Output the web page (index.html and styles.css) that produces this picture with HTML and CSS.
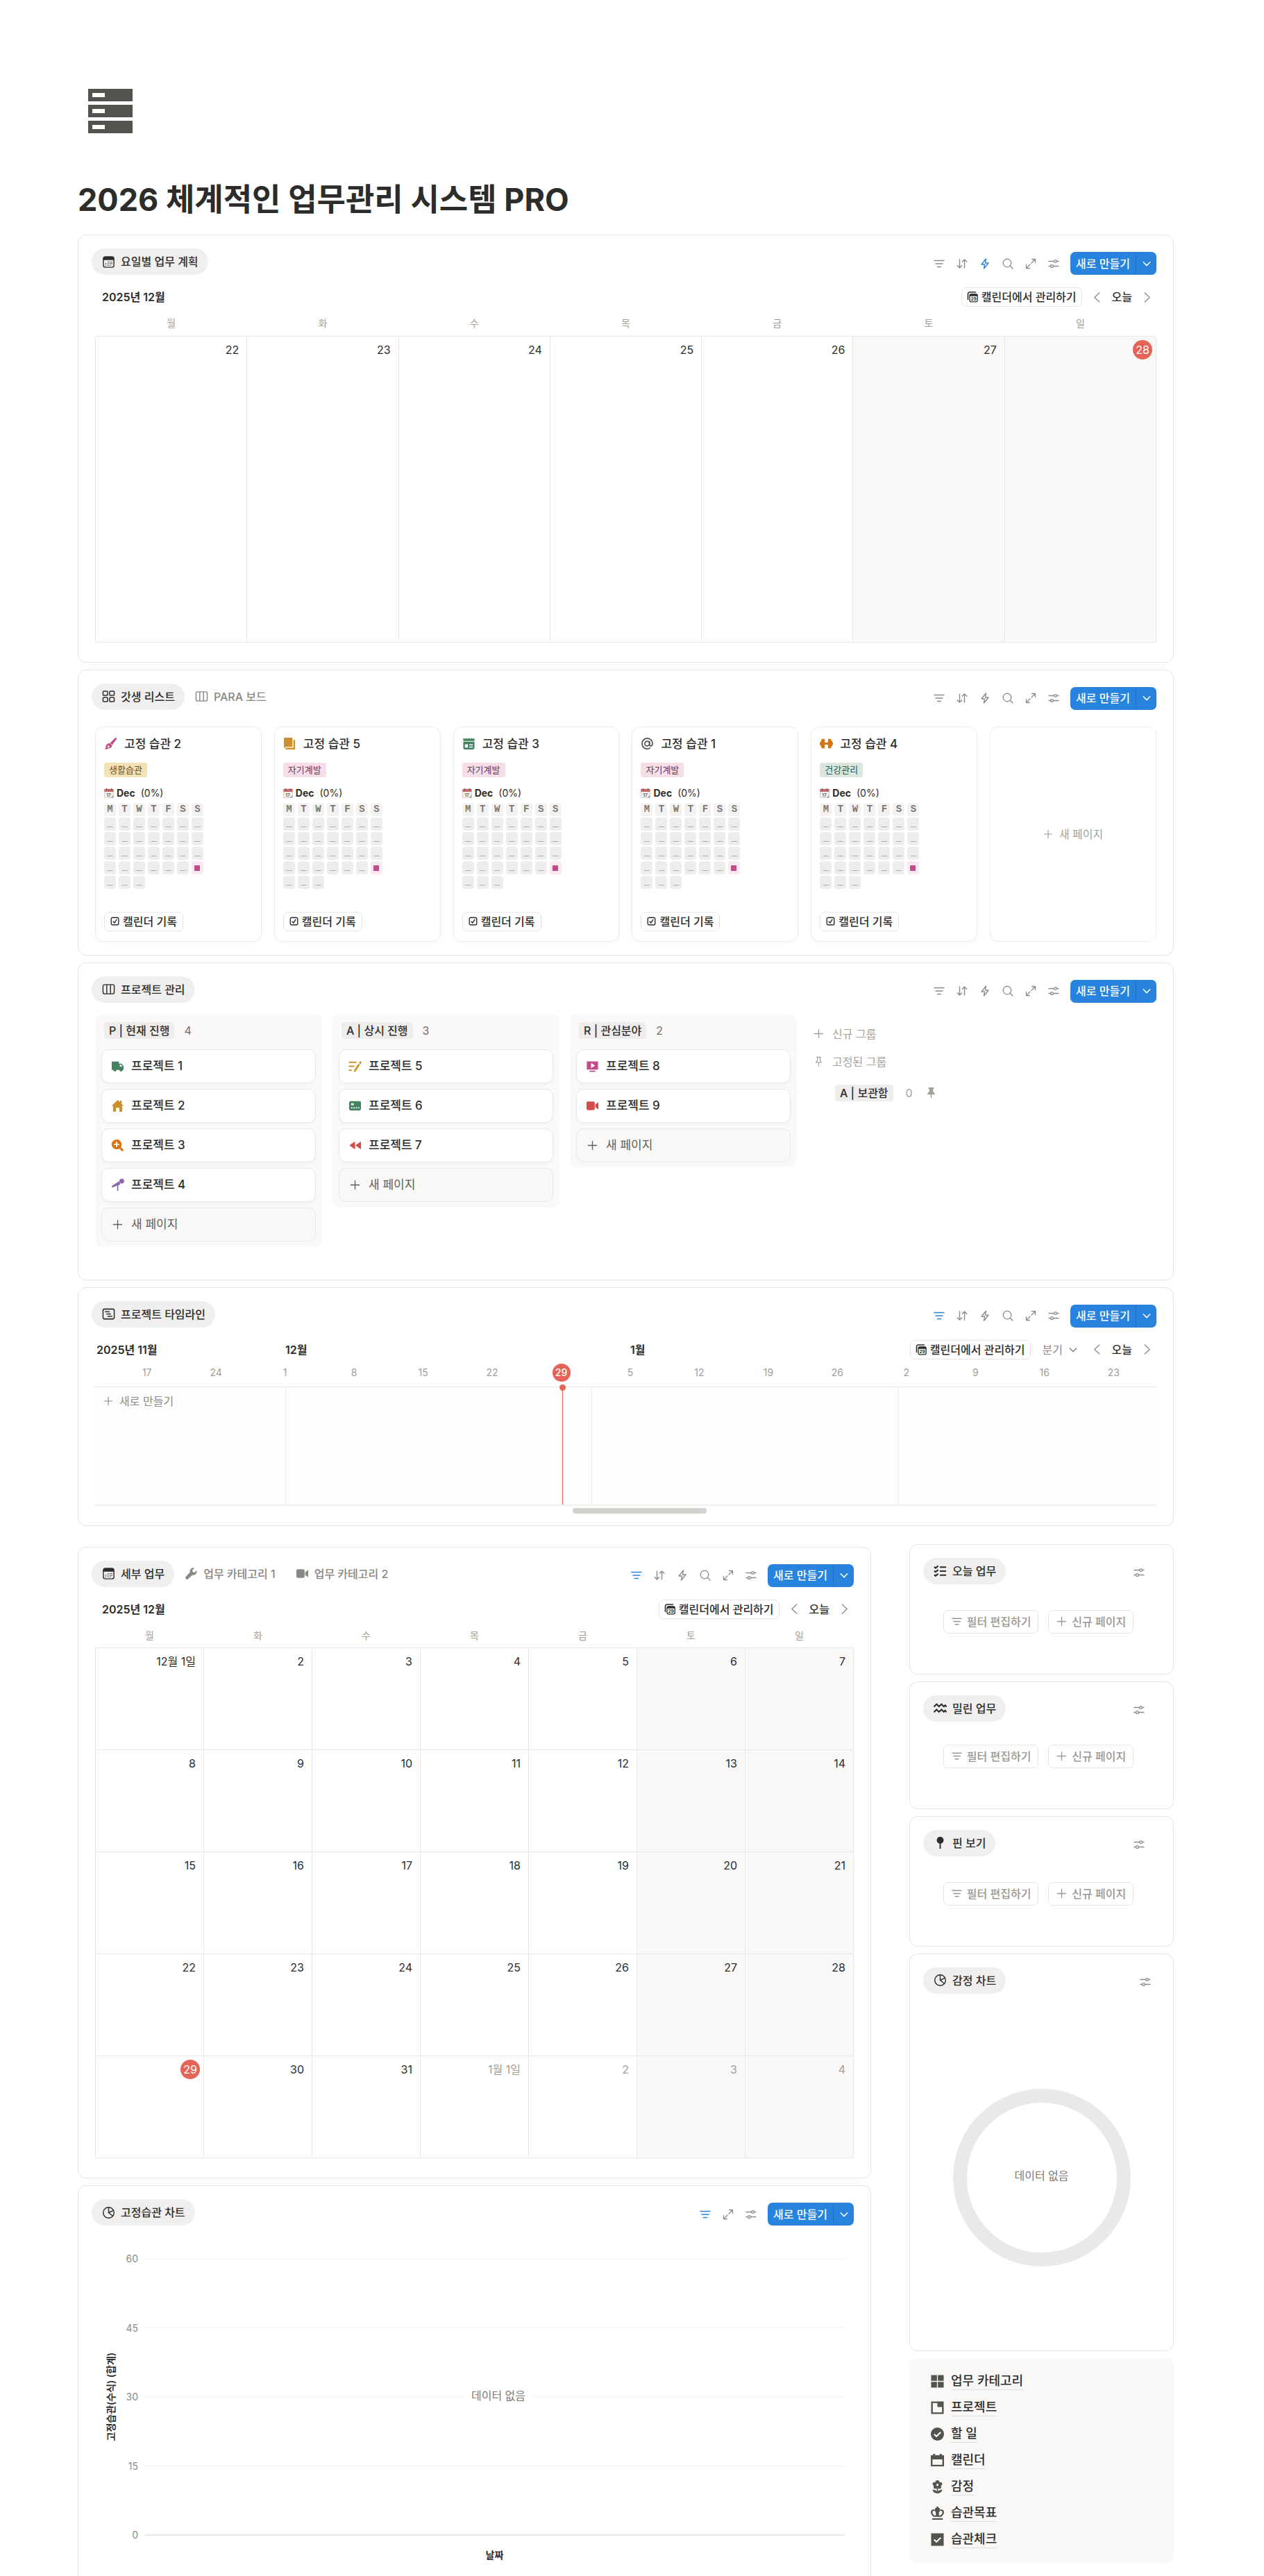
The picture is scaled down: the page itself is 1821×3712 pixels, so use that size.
FILE: index.html
```html
<!DOCTYPE html>
<html lang="ko">
<head>
    <meta charset="UTF-8">
    <meta name="viewport" content="width=device-width, initial-scale=1.0">
    <title>2026 체계적인 업무관리 시스템 PRO</title>
    <link rel="stylesheet" href="styles.css">
</head>
<body>
    <!-- Icon sprite -->
    <svg class="sprite" aria-hidden="true">
        <symbol id="i-filter" viewBox="0 0 16 16"><path d="M1 3.5h14M3 8h10M5.5 12.500h5" fill="none" stroke="currentColor" stroke-width="1.5" stroke-linecap="round"/></symbol>
        <symbol id="i-sort" viewBox="0 0 16 16"><path d="M4.5 2v12M1.200 10.700l3.300 3.300 3.300-3.300M11.500 14V2M8.200 5.300L11.500 2l3.300 3.300" fill="none" stroke="currentColor" stroke-width="1.4" stroke-linecap="round" stroke-linejoin="round"/></symbol>
        <symbol id="i-bolt" viewBox="0 0 16 16"><path d="M9.500 1L3 9h4.500l-1 6L13 7H8.500z" fill="none" stroke="currentColor" stroke-width="1.4" stroke-linejoin="round"/></symbol>
        <symbol id="i-search" viewBox="0 0 16 16"><circle cx="7" cy="7" r="5.8" fill="none" stroke="currentColor" stroke-width="1.3"/><path d="M11.300 11.300L15 15" stroke="currentColor" stroke-width="1.3" stroke-linecap="round"/></symbol>
        <symbol id="i-expand" viewBox="0 0 16 16"><path d="M9.500 1.500h5v5M14.500 1.500L9 7M6.500 14.500h-5v-5M1.500 14.500L7 9" fill="none" stroke="currentColor" stroke-width="1.3" stroke-linecap="round" stroke-linejoin="round"/></symbol>
        <symbol id="i-sliders" viewBox="0 0 16 16"><path d="M1 4.500h7.500M12.500 4.500H15M1 11.500h2.500M7.500 11.500H15" stroke="currentColor" stroke-width="1.3" stroke-linecap="round"/><circle cx="10.500" cy="4.500" r="1.900" fill="none" stroke="currentColor" stroke-width="1.3"/><circle cx="5.500" cy="11.500" r="1.900" fill="none" stroke="currentColor" stroke-width="1.3"/></symbol>
        <symbol id="i-down" viewBox="0 0 16 16"><path d="M2.500 5.500L8 11l5.500-5.500" fill="none" stroke="currentColor" stroke-width="1.7" stroke-linecap="round" stroke-linejoin="round"/></symbol>
        <symbol id="i-left" viewBox="0 0 16 16"><path d="M11.500 1L4 8l7.500 7" fill="none" stroke="currentColor" stroke-width="1.4" stroke-linecap="round" stroke-linejoin="round"/></symbol>
        <symbol id="i-right" viewBox="0 0 16 16"><path d="M4.500 1L12 8l-7.500 7" fill="none" stroke="currentColor" stroke-width="1.4" stroke-linecap="round" stroke-linejoin="round"/></symbol>
        <symbol id="i-plus" viewBox="0 0 16 16"><path d="M8 1.500v13M1.500 8h13" stroke="currentColor" stroke-width="1.4" stroke-linecap="round"/></symbol>
        <symbol id="i-month" viewBox="0 0 20 20"><rect x="2" y="2" width="16" height="16" rx="3" fill="none" stroke="currentColor" stroke-width="1.5"/><path d="M2 5a3 3 0 0 1 3-3h10a3 3 0 0 1 3 3v2H2z" fill="currentColor"/><path d="M8.500 10H10M11.500 10H13M14 10h1.500M5 12.500h1.500M8.500 12.500H10M11.500 12.500H13M14 12.500h1.500M5 15h1.500M8.500 15H10M11.500 15H13" stroke="currentColor" stroke-width="1.2"/></symbol>
        <symbol id="i-gallery" viewBox="0 0 20 20"><g fill="none" stroke="currentColor" stroke-width="1.6"><rect x="1.5" y="2" width="7" height="6.5" rx="1.5"/><rect x="11.5" y="2" width="7" height="6.5" rx="1.5"/><rect x="1.5" y="11.5" width="7" height="6.5" rx="1.5"/><rect x="11.5" y="11.5" width="7" height="6.5" rx="1.5"/></g></symbol>
        <symbol id="i-board" viewBox="0 0 20 20"><path d="M4 3h12a2.500 2.500 0 0 1 2.500 2.500v9A2.500 2.500 0 0 1 16 17H4a2.500 2.500 0 0 1-2.500-2.500v-9A2.500 2.500 0 0 1 4 3zM7.200 3v14M12.800 3v14" fill="none" stroke="currentColor" stroke-width="1.5"/></symbol>
        <symbol id="i-timeline" viewBox="0 0 20 20"><rect x="1.5" y="2.5" width="17" height="15" rx="2.5" fill="none" stroke="currentColor" stroke-width="1.6"/><path d="M5 6.500h6M7 10h6M9 13.500h6" stroke="currentColor" stroke-width="1.5" stroke-linecap="round"/></symbol>
        <symbol id="i-pie" viewBox="0 0 20 20"><circle cx="10" cy="10" r="8.2" fill="none" stroke="currentColor" stroke-width="1.5"/><path d="M10 2v8l6.200 5M10 10l7.500-3.500" fill="none" stroke="currentColor" stroke-width="1.5"/></symbol>
        <symbol id="i-wrench" viewBox="0 0 20 20"><path d="M18.300 5.300l-3.200 3.100-2.800-.7-.7-2.800 3.200-3.200A5.300 5.300 0 0 0 8 8.200l-6.100 6.600a2.300 2.300 0 0 0 3.300 3.300l6.600-6.100a5.300 5.300 0 0 0 6.500-6.700z" fill="currentColor"/></symbol>
        <symbol id="i-video" viewBox="0 0 20 20"><rect x="1" y="3.500" width="12.500" height="13" rx="2.2" fill="currentColor"/><path d="M19 4.500v11L14.500 12V8z" fill="currentColor"/></symbol>
        <symbol id="i-checklist" viewBox="0 0 20 20"><path d="M1 4l2 1.800L7 2.500M1 10l2 1.800L7 8.500M1 16l2 1.800L7 14.500M9.500 4.500H19M9.500 10.500H19M9.500 16.500H19" fill="none" stroke="currentColor" stroke-width="2.2"/></symbol>
        <symbol id="i-waves" viewBox="0 0 20 20"><path d="M.5 8l4-4 3.700 3.500L12 4l3.500 3.500 2-2 2 2.500M.5 16l4-4 3.700 3.500L12 12l3.500 3.500 2-2 2 2.500" fill="none" stroke="currentColor" stroke-width="2.2"/></symbol>
        <symbol id="i-pinball" viewBox="0 0 20 20"><circle cx="10" cy="6" r="5.2" fill="currentColor"/><path d="M10 10v9" stroke="currentColor" stroke-width="2"/></symbol>
        <symbol id="i-calstack" viewBox="0 0 16 16"><path d="M1.500 12V3.500A2.500 2.500 0 0 1 4 1h9" fill="none" stroke="currentColor" stroke-width="1.6"/><rect x="4" y="3.8" width="11.2" height="11" rx="2" fill="none" stroke="currentColor" stroke-width="1.3"/><path d="M4 6.800V5.500a2 2 0 0 1 2-2h7.200a2 2 0 0 1 2 2v1.300z" fill="currentColor"/><text x="9.6" y="13.3" font-size="6.5" font-weight="700" text-anchor="middle" fill="currentColor">29</text></symbol>
        <symbol id="i-check" viewBox="0 0 16 16"><rect x="1.5" y="1.5" width="13" height="13" rx="2.5" fill="none" stroke="currentColor" stroke-width="1.7"/><path d="M5 8.500l2.200 2.300L11 5" fill="none" stroke="currentColor" stroke-width="1.7" stroke-linecap="round"/></symbol>
        <symbol id="i-pin" viewBox="0 0 16 16"><path d="M5 1.500h6M6 1.500v4l-2 4h8l-2-4v-4M8 9.500V15" fill="none" stroke="currentColor" stroke-width="1.3" stroke-linecap="round" stroke-linejoin="round"/></symbol>
        <symbol id="i-pin-solid" viewBox="0 0 16 16"><path d="M4.500 1h7v1.800L10.500 4v2L13 9.500v1H8.700V15H7.300v-4.500H3v-1L5.500 6V4l-1-1.200z" fill="currentColor"/></symbol>
        <symbol id="i-cal-emoji" viewBox="0 0 14 14"><rect x=".5" y="1" width="13" height="12.5" rx="1" fill="#f1f0ee" stroke="#b8b6b2" stroke-width=".6"/><path d="M.5 1h13v4H.5z" fill="#c56a68"/><path d="M3.500.3v2M10.500.3v2" stroke="#6e3532" stroke-width="1.2"/><text x="6.6" y="11.8" font-size="6.5" font-weight="700" text-anchor="middle" fill="#6a6865">17</text><path d="M13.500 9.500v4h-4z" fill="#a9a7a3"/></symbol>
        <symbol id="i-brush" viewBox="0 0 20 20"><path d="M18.500 1.200c.8.600.6 1.500.2 2.300L12.300 12 9 9.300 16 2c.7-.8 1.700-1.300 2.500-.8z" fill="currentColor"/><path d="M8.500 9.500l3.500 3c0 3-2 4.500-4.700 4.700L3 19l-2 .3L2.500 17c-.8-4 2-7.500 6-7.500zm-2 3.700a1.500 1.500 0 1 0 .1 0z" fill="currentColor" fill-rule="evenodd"/></symbol>
        <symbol id="i-book" viewBox="0 0 20 20"><path d="M1 2.500A1.500 1.500 0 0 1 2.500 1H14v14H5a2 2 0 0 0-2 1.500c-1.200 0-2-.6-2-2z" fill="currentColor"/><path d="M15.500 4.500H18V19H5.500c-1.300 0-2-.7-2-1.500s.7-1.300 1.500-1.300h10.500z" fill="currentColor"/></symbol>
        <symbol id="i-news" viewBox="0 0 20 20"><path d="M1.500 1.500L4 3l2-1.500L8 3l2-1.500L12 3l2-1.500L16 3l2.500-1.500V6h-17zM1.500 7h17v9.500A2.500 2.500 0 0 1 16 19H4a2.500 2.500 0 0 1-2.500-2.500zM4 11v5h4.500v-5zm6.500 0v1.500H16V11zm0 3.500V16H16v-1.500z" fill="currentColor" fill-rule="evenodd"/></symbol>
        <symbol id="i-at" viewBox="0 0 20 20"><g fill="none" stroke="currentColor" stroke-width="1.8"><circle cx="9.8" cy="10" r="3.6"/><path d="M13.400 6v5.500c0 3.200 4.600 2.800 4.600-1.500a8 8 0 1 0-3.300 6.500"/></g></symbol>
        <symbol id="i-dumbbell" viewBox="0 0 20 20"><path d="M3.500 3h3a1 1 0 0 1 1 1v4.500h5V4a1 1 0 0 1 1-1h3a1 1 0 0 1 1 1v2H19v2.500h1v3h-1V14h-1.500v2a1 1 0 0 1-1 1h-3a1 1 0 0 1-1-1v-4.500h-5V16a1 1 0 0 1-1 1h-3a1 1 0 0 1-1-1v-2H1v-2.500H0v-3h1V6h1.500V4a1 1 0 0 1 1-1z" fill="currentColor"/></symbol>
        <symbol id="i-truck" viewBox="0 0 20 20"><path d="M1 3h11v3h4l3 4v5.500h-1.500a2.400 2.400 0 0 1-4.800 0H8.300a2.400 2.400 0 0 1-4.800 0H1zM13.200 7.500v3H17l-1.800-3z" fill="currentColor" fill-rule="evenodd"/></symbol>
        <symbol id="i-house" viewBox="0 0 20 20"><path d="M10 1l3.500 3.200V2H16v4.500l3 3.500h-2v9h-4.500v-6h-5v6H3v-9H1z" fill="currentColor"/></symbol>
        <symbol id="i-zoomin" viewBox="0 0 20 20"><path d="M8.500 1a7.500 7.500 0 0 1 6.300 11.500l4.400 4.400-2.300 2.300-4.400-4.400A7.500 7.500 0 1 1 8.500 1zm-1 3.500v3h-3v2h3v3h2v-3h3v-2h-3v-3z" fill="currentColor" fill-rule="evenodd"/></symbol>
        <symbol id="i-telescope" viewBox="0 0 20 20"><circle cx="16.2" cy="4.2" r="3.6" fill="currentColor"/><path d="M12 4.500l2.300 4.600L11 10.500V19H9.200v-8L1.500 14 1 11.500z" fill="currentColor"/></symbol>
        <symbol id="i-compose" viewBox="0 0 20 20"><path d="M.5 4H12M.5 10H9M.5 16H5" stroke="currentColor" stroke-width="2.2"/><path d="M15 6l2.500 2L11 17.500 8 19l.8-3.500zM18 2l2 2.200L18.300 7 15.800 5z" fill="currentColor"/></symbol>
        <symbol id="i-terminal" viewBox="0 0 20 20"><path d="M3.500 3h13A2.500 2.500 0 0 1 19 5.500v9a2.500 2.500 0 0 1-2.500 2.500h-13A2.500 2.500 0 0 1 1 14.500v-9A2.500 2.500 0 0 1 3.500 3zM4 6v3h4V6zm0 6v2h2v-2zm3.500 0v2h2v-2zm3.500 0v2h2v-2zm3.500 0v2h2v-2z" fill="currentColor" fill-rule="evenodd"/></symbol>
        <symbol id="i-rewind" viewBox="0 0 20 20"><path d="M10 4v12L1.500 10zM19 4v12l-8.500-6z" fill="currentColor"/></symbol>
        <symbol id="i-player" viewBox="0 0 20 20"><path d="M1.500 2.500h17V15h-17zM8 5v8l6-4z" fill="currentColor" fill-rule="evenodd"/><path d="M5.500 17.500h9" stroke="currentColor" stroke-width="1.8"/></symbol>
        <symbol id="i-server" viewBox="0 0 64 64"><path d="M0 0h64v18H0zM6 6v6h18V6zM0 23h64v18H0zM6 29v6h18v-6zM0 46h64v18H0zM6 52v6h18v-6z" fill="currentColor" fill-rule="evenodd"/></symbol>
        <symbol id="i-tiles" viewBox="0 0 20 20"><path d="M.5.5h8.800v8.800H.5zM10.700.5h8.800v8.800h-8.800zM.5 10.700h8.800v8.800H.5zM10.700 10.700h8.800v8.800h-8.800z" fill="currentColor"/></symbol>
        <symbol id="i-tab" viewBox="0 0 20 20"><path d="M.5.5h19v19H.5zM3 3v14h14V9h-7V3z" fill="currentColor" fill-rule="evenodd"/></symbol>
        <symbol id="i-done" viewBox="0 0 20 20"><circle cx="10" cy="10" r="10" fill="currentColor"/><path d="M5 10.200l3.500 3.300L15 7" fill="none" stroke="#f9f8f7" stroke-width="2.2"/></symbol>
        <symbol id="i-calendar" viewBox="0 0 20 20"><path d="M3.500 0h3v2h7V0h3v2H20v17H0V2h3.500zM2.500 8.500v8h15v-8z" fill="currentColor" fill-rule="evenodd"/></symbol>
        <symbol id="i-flower" viewBox="0 0 20 20"><g fill="currentColor"><circle cx="10" cy="3" r="3"/><circle cx="5.6" cy="5.6" r="2.8"/><circle cx="14.4" cy="5.6" r="2.8"/><circle cx="7" cy="10.2" r="2.8"/><circle cx="13" cy="10.2" r="2.8"/><circle cx="10" cy="7" r="3"/><path d="M9.100 11h1.800v8H9.100zM9.800 20C6 19.800 3.500 18 2.500 14.500c3.300-.5 6.300 1 7.500 4 1.200-3 4.200-4.500 7.500-4-1 3.500-3.500 5.300-7.300 5.500z"/></g><circle cx="10" cy="7" r="1.7" fill="#f9f8f7"/></symbol>
        <symbol id="i-crown" viewBox="0 0 20 20"><path d="M8.500 0h3v2h2v3C16.500 3 20 5 20 8.500c0 3-2 5.500-4.500 7h-11C2 14 0 11.500 0 8.500 0 5 3.500 3 6.500 5V2h2zM5.500 13.500h2c.5-3 .3-5-1-6.700-1.800-1-4-.3-4 2 0 1.900 1.200 3.500 3 4.700zm9 0c1.800-1.200 3-2.800 3-4.700 0-2.300-2.200-3-4-2-1.300 1.700-1.500 3.700-1 6.700zM2 17.500h16V20H2z" fill="currentColor" fill-rule="evenodd"/></symbol>
        <symbol id="i-checkbox" viewBox="0 0 20 20"><path d="M.5.5h19v19H.5z" fill="currentColor"/><path d="M5 10l3.500 3.500L15 7" fill="none" stroke="#f9f8f7" stroke-width="2.2"/></symbol>
    </svg>

    <main class="page">
        <svg class="page-icon"><use href="#i-server"/></svg>
        <h1>2026 체계적인 업무관리 시스템 PRO</h1>

        <div class="stack">
            <!-- Weekly plan -->
            <section class="card">
                <header class="card-head">
                    <nav class="tabs">
                        <a class="tab active" href="#"><svg><use href="#i-month"/></svg>요일별 업무 계획</a>
                    </nav>
                    <div class="tools">
                        <button class="tool" aria-label="필터"><svg><use href="#i-filter"/></svg></button>
                        <button class="tool" aria-label="정렬"><svg><use href="#i-sort"/></svg></button>
                        <button class="tool on" aria-label="자동화"><svg><use href="#i-bolt"/></svg></button>
                        <button class="tool" aria-label="검색"><svg><use href="#i-search"/></svg></button>
                        <button class="tool" aria-label="확대"><svg><use href="#i-expand"/></svg></button>
                        <button class="tool" aria-label="설정"><svg><use href="#i-sliders"/></svg></button>
                        <div class="new"><button class="new-main">새로 만들기</button><button class="new-more" aria-label="더 보기"><svg><use href="#i-down"/></svg></button></div>
                    </div>
                </header>
                <div class="cal-bar">
                    <h2>2025년 12월</h2>
                    <div class="cal-nav">
                        <button class="cal-open"><svg><use href="#i-calstack"/></svg>캘린더에서 관리하기</button>
                        <button class="arrow" aria-label="이전"><svg><use href="#i-left"/></svg></button>
                        <button class="today">오늘</button>
                        <button class="arrow" aria-label="다음"><svg><use href="#i-right"/></svg></button>
                    </div>
                </div>
                <table class="calendar week">
                    <thead>
                        <tr><th>월</th><th>화</th><th>수</th><th>목</th><th>금</th><th>토</th><th>일</th></tr>
                    </thead>
                    <tbody>
                        <tr><td>22</td><td>23</td><td>24</td><td>25</td><td>26</td><td>27</td><td><span class="now">28</span></td></tr>
                    </tbody>
                </table>
            </section>

            <!-- Habits -->
            <section class="card">
                <header class="card-head">
                    <nav class="tabs">
                        <a class="tab active" href="#"><svg><use href="#i-gallery"/></svg>갓생 리스트</a>
                        <a class="tab" href="#"><svg><use href="#i-board"/></svg>PARA 보드</a>
                    </nav>
                    <div class="tools">
                        <button class="tool" aria-label="필터"><svg><use href="#i-filter"/></svg></button>
                        <button class="tool" aria-label="정렬"><svg><use href="#i-sort"/></svg></button>
                        <button class="tool" aria-label="자동화"><svg><use href="#i-bolt"/></svg></button>
                        <button class="tool" aria-label="검색"><svg><use href="#i-search"/></svg></button>
                        <button class="tool" aria-label="확대"><svg><use href="#i-expand"/></svg></button>
                        <button class="tool" aria-label="설정"><svg><use href="#i-sliders"/></svg></button>
                        <div class="new"><button class="new-main">새로 만들기</button><button class="new-more" aria-label="더 보기"><svg><use href="#i-down"/></svg></button></div>
                    </div>
                </header>
                <div class="gallery" id="habits">
                    <button class="habit-new"><svg><use href="#i-plus"/></svg>새 페이지</button>
                </div>
            </section>

            <!-- Project board -->
            <section class="card board-card">
                <header class="card-head">
                    <nav class="tabs">
                        <a class="tab active" href="#"><svg><use href="#i-board"/></svg>프로젝트 관리</a>
                    </nav>
                    <div class="tools">
                        <button class="tool" aria-label="필터"><svg><use href="#i-filter"/></svg></button>
                        <button class="tool" aria-label="정렬"><svg><use href="#i-sort"/></svg></button>
                        <button class="tool" aria-label="자동화"><svg><use href="#i-bolt"/></svg></button>
                        <button class="tool" aria-label="검색"><svg><use href="#i-search"/></svg></button>
                        <button class="tool" aria-label="확대"><svg><use href="#i-expand"/></svg></button>
                        <button class="tool" aria-label="설정"><svg><use href="#i-sliders"/></svg></button>
                        <div class="new"><button class="new-main">새로 만들기</button><button class="new-more" aria-label="더 보기"><svg><use href="#i-down"/></svg></button></div>
                    </div>
                </header>
                <div class="board">
                    <div class="column">
                        <div class="column-head"><span class="group">P | 현재 진행</span><span>4</span></div>
                        <a class="item" href="#"><svg class="green"><use href="#i-truck"/></svg>프로젝트 1</a>
                        <a class="item" href="#"><svg class="yellow"><use href="#i-house"/></svg>프로젝트 2</a>
                        <a class="item" href="#"><svg class="orange"><use href="#i-zoomin"/></svg>프로젝트 3</a>
                        <a class="item" href="#"><svg class="purple"><use href="#i-telescope"/></svg>프로젝트 4</a>
                        <button class="item add"><svg><use href="#i-plus"/></svg>새 페이지</button>
                    </div>
                    <div class="column">
                        <div class="column-head"><span class="group">A | 상시 진행</span><span>3</span></div>
                        <a class="item" href="#"><svg class="yellow"><use href="#i-compose"/></svg>프로젝트 5</a>
                        <a class="item" href="#"><svg class="green"><use href="#i-terminal"/></svg>프로젝트 6</a>
                        <a class="item" href="#"><svg class="red"><use href="#i-rewind"/></svg>프로젝트 7</a>
                        <button class="item add"><svg><use href="#i-plus"/></svg>새 페이지</button>
                    </div>
                    <div class="column">
                        <div class="column-head"><span class="group">R | 관심분야</span><span>2</span></div>
                        <a class="item" href="#"><svg class="pink"><use href="#i-player"/></svg>프로젝트 8</a>
                        <a class="item" href="#"><svg class="red"><use href="#i-video"/></svg>프로젝트 9</a>
                        <button class="item add"><svg><use href="#i-plus"/></svg>새 페이지</button>
                    </div>
                    <div class="groups">
                        <button class="group-link"><svg><use href="#i-plus"/></svg>신규 그룹</button>
                        <button class="group-link"><svg><use href="#i-pin"/></svg>고정된 그룹</button>
                        <div class="pinned"><span class="group">A | 보관함</span><span>0</span><svg><use href="#i-pin-solid"/></svg></div>
                    </div>
                </div>
            </section>

            <!-- Timeline -->
            <section class="card timeline-card">
                <header class="card-head">
                    <nav class="tabs">
                        <a class="tab active" href="#"><svg><use href="#i-timeline"/></svg>프로젝트 타임라인</a>
                    </nav>
                    <div class="tools">
                        <button class="tool on" aria-label="필터"><svg><use href="#i-filter"/></svg></button>
                        <button class="tool" aria-label="정렬"><svg><use href="#i-sort"/></svg></button>
                        <button class="tool" aria-label="자동화"><svg><use href="#i-bolt"/></svg></button>
                        <button class="tool" aria-label="검색"><svg><use href="#i-search"/></svg></button>
                        <button class="tool" aria-label="확대"><svg><use href="#i-expand"/></svg></button>
                        <button class="tool" aria-label="설정"><svg><use href="#i-sliders"/></svg></button>
                        <div class="new"><button class="new-main">새로 만들기</button><button class="new-more" aria-label="더 보기"><svg><use href="#i-down"/></svg></button></div>
                    </div>
                </header>
                <div class="months">
                    <h2>2025년 11월</h2>
                    <h2>12월</h2>
                    <h2>1월</h2>
                    <div class="cal-nav">
                        <button class="cal-open"><svg><use href="#i-calstack"/></svg>캘린더에서 관리하기</button>
                        <label class="scale">
                            <select aria-label="기간"><option>분기</option></select>
                            <svg><use href="#i-down"/></svg>
                        </label>
                        <button class="arrow" aria-label="이전"><svg><use href="#i-left"/></svg></button>
                        <button class="today">오늘</button>
                        <button class="arrow" aria-label="다음"><svg><use href="#i-right"/></svg></button>
                    </div>
                </div>
                <div class="weeks">
                    <span>17</span><span>24</span><span>1</span><span>8</span><span>15</span><span>22</span><span><b class="now">29</b></span><span>5</span><span>12</span><span>19</span><span>26</span><span>2</span><span>9</span><span>16</span><span>23</span>
                </div>
                <div class="track">
                    <div><button class="track-new"><svg><use href="#i-plus"/></svg>새로 만들기</button></div>
                    <div></div>
                    <div></div>
                    <div></div>
                    <i class="marker"></i>
                </div>
                <div class="scroll"><i></i></div>
            </section>
        </div>

        <div class="columns">
            <div class="stack left">
                <!-- Monthly tasks -->
                <section class="card">
                    <header class="card-head">
                        <nav class="tabs">
                            <a class="tab active" href="#"><svg><use href="#i-month"/></svg>세부 업무</a>
                            <a class="tab" href="#"><svg><use href="#i-wrench"/></svg>업무 카테고리 1</a>
                            <a class="tab" href="#"><svg><use href="#i-video"/></svg>업무 카테고리 2</a>
                        </nav>
                        <div class="tools">
                            <button class="tool on" aria-label="필터"><svg><use href="#i-filter"/></svg></button>
                            <button class="tool" aria-label="정렬"><svg><use href="#i-sort"/></svg></button>
                            <button class="tool" aria-label="자동화"><svg><use href="#i-bolt"/></svg></button>
                            <button class="tool" aria-label="검색"><svg><use href="#i-search"/></svg></button>
                            <button class="tool" aria-label="확대"><svg><use href="#i-expand"/></svg></button>
                            <button class="tool" aria-label="설정"><svg><use href="#i-sliders"/></svg></button>
                            <div class="new"><button class="new-main">새로 만들기</button><button class="new-more" aria-label="더 보기"><svg><use href="#i-down"/></svg></button></div>
                        </div>
                    </header>
                    <div class="cal-bar">
                        <h2>2025년 12월</h2>
                        <div class="cal-nav">
                            <button class="cal-open"><svg><use href="#i-calstack"/></svg>캘린더에서 관리하기</button>
                            <button class="arrow" aria-label="이전"><svg><use href="#i-left"/></svg></button>
                            <button class="today">오늘</button>
                            <button class="arrow" aria-label="다음"><svg><use href="#i-right"/></svg></button>
                        </div>
                    </div>
                    <table class="calendar">
                        <thead>
                            <tr><th>월</th><th>화</th><th>수</th><th>목</th><th>금</th><th>토</th><th>일</th></tr>
                        </thead>
                        <tbody>
                            <tr><td>12월 1일</td><td>2</td><td>3</td><td>4</td><td>5</td><td>6</td><td>7</td></tr>
                            <tr><td>8</td><td>9</td><td>10</td><td>11</td><td>12</td><td>13</td><td>14</td></tr>
                            <tr><td>15</td><td>16</td><td>17</td><td>18</td><td>19</td><td>20</td><td>21</td></tr>
                            <tr><td>22</td><td>23</td><td>24</td><td>25</td><td>26</td><td>27</td><td>28</td></tr>
                            <tr><td><span class="now">29</span></td><td>30</td><td>31</td><td class="out">1월 1일</td><td class="out">2</td><td class="out">3</td><td class="out">4</td></tr>
                        </tbody>
                    </table>
                </section>

                <!-- Habit chart -->
                <section class="card chart-card">
                    <header class="card-head">
                        <nav class="tabs">
                            <a class="tab active" href="#"><svg><use href="#i-pie"/></svg>고정습관 차트</a>
                        </nav>
                        <div class="tools">
                            <button class="tool on" aria-label="필터"><svg><use href="#i-filter"/></svg></button>
                            <button class="tool" aria-label="확대"><svg><use href="#i-expand"/></svg></button>
                            <button class="tool" aria-label="설정"><svg><use href="#i-sliders"/></svg></button>
                            <div class="new"><button class="new-main">새로 만들기</button><button class="new-more" aria-label="더 보기"><svg><use href="#i-down"/></svg></button></div>
                        </div>
                    </header>
                    <div class="chart">
                        <div class="y-title">고정습관(수식) (합계)</div>
                        <div class="plot">
                            <div class="tick"><span>60</span></div>
                            <div class="tick"><span>45</span></div>
                            <div class="tick"><span>30</span></div>
                            <div class="tick"><span>15</span></div>
                            <div class="tick base"><span>0</span></div>
                            <div class="empty"><span>데이터 없음</span></div>
                        </div>
                    </div>
                    <div class="x-title">날짜</div>
                </section>
            </div>

            <aside class="stack">
                <section class="card side-card">
                    <header class="card-head">
                        <a class="tab active" href="#"><svg><use href="#i-checklist"/></svg>오늘 업무</a>
                        <button class="tool" aria-label="설정"><svg><use href="#i-sliders"/></svg></button>
                    </header>
                    <div class="actions">
                        <button class="action"><svg><use href="#i-filter"/></svg>필터 편집하기</button>
                        <button class="action"><svg><use href="#i-plus"/></svg>신규 페이지</button>
                    </div>
                </section>
                <section class="card side-card tight">
                    <header class="card-head">
                        <a class="tab active" href="#"><svg><use href="#i-waves"/></svg>밀린 업무</a>
                        <button class="tool" aria-label="설정"><svg><use href="#i-sliders"/></svg></button>
                    </header>
                    <div class="actions">
                        <button class="action"><svg><use href="#i-filter"/></svg>필터 편집하기</button>
                        <button class="action"><svg><use href="#i-plus"/></svg>신규 페이지</button>
                    </div>
                </section>
                <section class="card side-card">
                    <header class="card-head">
                        <a class="tab active" href="#"><svg><use href="#i-pinball"/></svg>핀 보기</a>
                        <button class="tool" aria-label="설정"><svg><use href="#i-sliders"/></svg></button>
                    </header>
                    <div class="actions">
                        <button class="action"><svg><use href="#i-filter"/></svg>필터 편집하기</button>
                        <button class="action"><svg><use href="#i-plus"/></svg>신규 페이지</button>
                    </div>
                </section>
                <section class="card mood-card">
                    <header class="card-head">
                        <a class="tab active" href="#"><svg><use href="#i-pie"/></svg>감정 차트</a>
                        <button class="tool" aria-label="설정"><svg><use href="#i-sliders"/></svg></button>
                    </header>
                    <div class="donut">데이터 없음</div>
                </section>
                <nav class="links">
                    <a href="#"><svg><use href="#i-tiles"/></svg><span>업무 카테고리</span></a>
                    <a href="#"><svg><use href="#i-tab"/></svg><span>프로젝트</span></a>
                    <a href="#"><svg><use href="#i-done"/></svg><span>할 일</span></a>
                    <a href="#"><svg><use href="#i-calendar"/></svg><span>캘린더</span></a>
                    <a href="#"><svg><use href="#i-flower"/></svg><span>감정</span></a>
                    <a href="#"><svg><use href="#i-crown"/></svg><span>습관목표</span></a>
                    <a href="#"><svg><use href="#i-checkbox"/></svg><span>습관체크</span></a>
                </nav>
            </aside>
        </div>
    </main>

    <script>
        const habits = [
            { name: '고정 습관 2', icon: 'brush', color: 'pink', tag: '생활습관', tagColor: 'tag-yellow' },
            { name: '고정 습관 5', icon: 'book', color: 'yellow', tag: '자기계발', tagColor: 'tag-pink' },
            { name: '고정 습관 3', icon: 'news', color: 'green', tag: '자기계발', tagColor: 'tag-pink' },
            { name: '고정 습관 1', icon: 'at', color: 'gray', tag: '자기계발', tagColor: 'tag-pink' },
            { name: '고정 습관 4', icon: 'dumbbell', color: 'orange', tag: '건강관리', tagColor: 'tag-green' }
        ];

        // 31 days starting on Monday, the 28th is today
        function miniCalendar() {
            let cells = '';
            'MTWTFSS'.split('').forEach(day => {
                cells += `<b>${day}</b>`;
            });
            for (let day = 1; day <= 31; day++) {
                cells += day === 28 ? '<i class="hit"></i>' : '<i>_</i>';
            }
            return cells;
        }

        const gallery = document.getElementById('habits');
        const addButton = gallery.querySelector('.habit-new');

        habits.forEach(habit => {
            const card = document.createElement('article');
            card.className = 'habit';
            card.innerHTML = `
                <h3><svg class="${habit.color}"><use href="#i-${habit.icon}"/></svg>${habit.name}</h3>
                <span class="tag ${habit.tagColor}">${habit.tag}</span>
                <div class="rate"><svg><use href="#i-cal-emoji"/></svg><b>Dec</b><span>(0%)</span></div>
                <div class="mini">${miniCalendar()}</div>
                <button class="record"><svg><use href="#i-check"/></svg>캘린더 기록</button>
            `;
            gallery.insertBefore(card, addButton);
        });
    </script>
</body>
</html>
```

FILE: styles.css
```css
* {
    box-sizing: border-box;
}
body {
    margin: 0;
    font-family: Inter, "Noto Sans CJK KR", sans-serif;
    font-size: 16px;
    line-height: 24px;
    color: #2c2c2b;
    background-color: #ffffff;
}
h1, h2, h3 {
    margin: 0;
}
a {
    color: inherit;
    text-decoration: none;
}
button, select {
    margin: 0;
    padding: 0;
    border: none;
    background: none;
    font: inherit;
    color: inherit;
    cursor: pointer;
}
svg {
    display: block;
    flex: none;
    width: 16px;
    height: 16px;
}
.sprite {
    display: none;
}

/* Page */
.page {
    display: flex;
    flex-direction: column;
    min-height: 100vh;
    padding: 128px 130px 0 112px;
}
.page-icon {
    width: 64px;
    height: 64px;
    margin-left: 15px;
    color: #55534e;
}
h1 {
    margin: 66px 0 20px;
    font-size: 45px;
    line-height: 60px;
    font-weight: 700;
}
.stack {
    display: flex;
    flex-direction: column;
    gap: 10px;
}
.columns {
    flex: 1;
    display: grid;
    grid-template-columns: 3fr 1fr;
    gap: 55px;
    margin-top: 26px;
}
.left {
    padding-top: 4px;
}

/* Card */
.card {
    padding: 19px 24px 28px;
    border: 1px solid #e6e5e3;
    border-radius: 12px;
}
.card-head {
    display: flex;
    justify-content: space-between;
    align-items: flex-end;
    height: 38px;
    margin-left: -5px;
}
.tabs {
    display: flex;
}
.tab {
    display: flex;
    align-items: center;
    gap: 8px;
    height: 38px;
    padding: 0 14px 0 15px;
    border-radius: 19px;
    font-weight: 500;
    color: #8a8782;
}
.tab svg {
    width: 19px;
    height: 19px;
}
.tab.active {
    color: #2c2c2b;
    background-color: #f0efed;
}
.tools {
    display: flex;
    align-items: center;
    color: #8e8b86;
}
.tool {
    display: flex;
    justify-content: center;
    align-items: center;
    width: 33px;
    height: 33px;
    color: #8e8b86;
}
.tool.on {
    color: #2783de;
}
.new {
    display: flex;
    height: 33px;
    margin-left: 8px;
    border-radius: 7px;
    overflow: hidden;
    color: #ffffff;
    background-color: #2783de;
}
.new-main {
    width: 95px;
    font-weight: 500;
    border-right: 1px solid #2273c6;
}
.new-more {
    width: 29px;
    display: flex;
    justify-content: center;
    align-items: center;
}
.new-more svg {
    width: 14px;
    height: 14px;
}

/* Calendar */
.cal-bar {
    display: flex;
    justify-content: space-between;
    align-items: center;
    height: 28px;
    margin-top: 18px;
    padding-left: 10px;
}
h2 {
    font-size: 16px;
    line-height: 24px;
    font-weight: 600;
}
.cal-nav {
    display: flex;
    align-items: center;
    gap: 14px;
    padding-right: 6px;
}
.cal-open {
    display: flex;
    align-items: center;
    gap: 5px;
    height: 28px;
    padding: 0 7px;
    border: 1px solid #e6e5e3;
    border-radius: 7px;
    font-weight: 500;
}
.arrow {
    color: #8e8b86;
}
.arrow svg {
    width: 15px;
    height: 15px;
}
.today {
    font-weight: 500;
}
.calendar {
    width: 100%;
    border-collapse: collapse;
    table-layout: fixed;
}
.calendar th {
    height: 42px;
    padding: 7px 0 0;
    font-size: 14px;
    line-height: 20px;
    font-weight: 400;
    color: #a19e99;
}
.calendar td {
    height: 147px;
    padding: 7px 11px 0;
    border: 1px solid #e9e8e6;
    text-align: right;
    vertical-align: top;
}
.calendar.week td {
    height: 441px;
}
.calendar td:nth-child(n+6) {
    background-color: #f9f8f7;
}
.calendar .out {
    color: #a19e99;
}
.now {
    display: inline-block;
    width: 28px;
    height: 28px;
    border-radius: 14px;
    line-height: 28px;
    text-align: center;
    color: #ffffff;
    background-color: #e56458;
}
.calendar .now {
    margin: -2px -6px 0 0;
}

/* Habit gallery */
.gallery {
    display: grid;
    grid-template-columns: repeat(6, 1fr);
    gap: 18px;
    margin: 24px 0 -9px;
}
.habit, .habit-new {
    min-height: 310px;
    border: 1px solid #ecebe9;
    border-radius: 12px;
}
.habit {
    display: flex;
    flex-direction: column;
    align-items: flex-start;
    padding: 12px 12px 14px;
    box-shadow: 0 2px 4px rgba(0, 0, 0, 0.03);
}
.habit h3 {
    display: flex;
    align-items: center;
    gap: 10px;
    font-size: 17px;
    line-height: 24px;
    font-weight: 500;
}
.habit h3 svg {
    width: 19px;
    height: 19px;
}
.tag {
    margin-top: 15px;
    padding: 0 7px;
    border-radius: 3px;
    font-size: 13px;
    line-height: 21px;
}
.tag-yellow {
    color: #6b5426;
    background-color: #f3e1b6;
}
.tag-pink {
    color: #6b3a52;
    background-color: #f5dee6;
}
.tag-green {
    color: #2f5a43;
    background-color: #dbe6df;
}
.rate {
    display: flex;
    align-items: center;
    margin-top: 13px;
    font-size: 14px;
    line-height: 20px;
}
.rate svg {
    width: 14px;
    height: 14px;
    margin-right: 4px;
}
.rate span {
    margin-left: 8px;
}
.mini {
    display: grid;
    grid-template-columns: repeat(7, 17px);
    grid-auto-rows: 19px;
    gap: 2px 4px;
    margin-top: 4px;
    font-family: "Liberation Mono", monospace;
    font-size: 14px;
    line-height: 19px;
    text-align: center;
}
.mini b, .mini i {
    border-radius: 4px;
    font-style: normal;
    color: #7d7a75;
    background-color: #eeedec;
}
.mini b {
    background-color: #f3f2f0;
}
.mini i {
    line-height: 16px;
}
.mini .hit {
    padding: 6px 5px 5px 4px;
    background-color: #f9e9f1;
}
.mini .hit::before {
    content: "";
    display: block;
    height: 8px;
    background-color: #c14c8a;
}
.record {
    display: flex;
    align-items: center;
    gap: 5px;
    height: 28px;
    margin-top: auto;
    padding: 0 8px;
    border: 1px solid #e6e5e3;
    border-radius: 7px;
    font-weight: 500;
}
.record svg {
    width: 13px;
    height: 13px;
}
.habit-new {
    display: flex;
    justify-content: center;
    align-items: center;
    gap: 9px;
    color: #a6a299;
}
.habit-new svg {
    width: 14px;
    height: 14px;
}

/* Icon colours */
.green {
    color: #448361;
}
.yellow {
    color: #cb912f;
}
.orange {
    color: #d9730d;
}
.purple {
    color: #9065b0;
}
.pink {
    color: #c14c8a;
}
.red {
    color: #d44c47;
}
.gray {
    color: #55534e;
}

/* Board */
.board-card {
    padding-bottom: 47px;
}
.board {
    display: grid;
    grid-template-columns: repeat(3, 327fr) 503fr;
    align-items: start;
    gap: 15px;
    margin-top: 16px;
}
.column {
    display: flex;
    flex-direction: column;
    gap: 8px;
    padding: 12px 9px 8px;
    border-radius: 10px;
    background-color: #faf9f8;
}
.column-head {
    display: flex;
    align-items: center;
    gap: 14px;
    height: 24px;
    margin-bottom: 7px;
    padding-left: 4px;
    color: #6f6c67;
}
.group {
    padding: 0 7px;
    border-radius: 4px;
    font-weight: 500;
    color: #2c2c2b;
    background-color: #eeedeb;
}
.item {
    display: flex;
    align-items: center;
    gap: 10px;
    height: 49px;
    padding: 0 13px;
    border: 1px solid #e9e8e6;
    border-radius: 11px;
    font-size: 17px;
    font-weight: 500;
    background-color: #ffffff;
    box-shadow: 0 2px 4px rgba(0, 0, 0, 0.03);
}
.item svg {
    width: 19px;
    height: 19px;
}
.item.add {
    font-weight: 400;
    color: #5f5e59;
    background-color: #f9f8f7;
    box-shadow: none;
}
.item.add svg {
    padding: 2px;
}
.groups {
    display: flex;
    flex-direction: column;
    align-items: flex-start;
    gap: 16px;
    padding: 17px 0 0 9px;
    color: #a6a299;
}
.group-link {
    display: flex;
    align-items: center;
    gap: 12px;
}
.group-link svg {
    width: 15px;
    height: 15px;
}
.pinned {
    display: flex;
    align-items: center;
    gap: 18px;
    margin-top: 5px;
    padding-left: 31px;
}
.pinned svg {
    width: 17px;
    height: 17px;
}

/* Timeline */
.timeline-card {
    padding-bottom: 17px;
}
.months {
    display: grid;
    grid-template-columns: 274fr 497fr 100fr 658fr;
    align-items: center;
    height: 28px;
    margin-top: 18px;
}
.months h2:first-child {
    padding-left: 2px;
}
.months .cal-nav {
    justify-content: flex-end;
}
.scale {
    display: flex;
    align-items: center;
    gap: 7px;
    padding: 0 6px 0 3px;
    color: #8e8b86;
}
.scale select {
    appearance: none;
    line-height: 24px;
}
.scale svg {
    width: 14px;
    height: 14px;
}
.weeks {
    display: grid;
    grid-template-columns: repeat(15, 1fr);
    align-items: center;
    height: 39px;
    padding: 0 12px 0 25px;
    font-size: 14px;
    text-align: center;
    color: #a19e99;
}
.weeks .now {
    width: 26px;
    height: 26px;
    border-radius: 13px;
    line-height: 26px;
    font-weight: 500;
}
.track {
    position: relative;
    display: grid;
    grid-template-columns: 274fr 441fr 441fr 373fr;
    height: 172px;
    border-top: 1px solid #e9e8e6;
    border-bottom: 2px solid #f0efed;
    background-color: #fdfdfd;
}
.track div + div {
    border-left: 1px solid #ebeae8;
}
.track-new {
    display: flex;
    align-items: center;
    gap: 9px;
    margin: 8px 0 0 12px;
    color: #8e8b86;
}
.track-new svg {
    width: 14px;
    height: 14px;
}
/* Today marker lies over the month cells */
.marker {
    position: absolute;
    top: 0;
    bottom: 0;
    left: 44%;
    border-left: 1px solid #e56458;
}
.marker::before {
    content: "";
    position: absolute;
    top: -4px;
    left: -5px;
    width: 9px;
    height: 9px;
    border-radius: 50%;
    background-color: #e56458;
}
.scroll {
    margin-top: 3px;
    padding-left: 45%;
}
.scroll i {
    display: block;
    width: 23%;
    height: 8px;
    border-radius: 4px;
    background-color: #d3d1cb;
}

/* Chart */
.chart-card {
    flex: 1;
    padding-bottom: 0;
    border-bottom: none;
    border-radius: 12px 12px 0 0;
}
.chart {
    display: flex;
    align-items: center;
    margin-top: 38px;
    padding: 0 13px 0 14px;
}
.y-title {
    width: 18px;
    writing-mode: vertical-rl;
    text-orientation: sideways;
    transform: rotate(180deg);
    font-size: 14px;
    line-height: 18px;
    font-weight: 600;
}
.plot {
    position: relative;
    flex: 1;
    display: flex;
    flex-direction: column;
    justify-content: space-between;
    height: 418px;
}
.tick {
    display: flex;
    align-items: center;
    gap: 10px;
    font-size: 14px;
    line-height: 20px;
    color: #8e8b86;
}
.tick span {
    width: 30px;
    text-align: right;
}
.tick::after {
    content: "";
    flex: 1;
    border-top: 1px dotted #e3e2e0;
}
.tick.base::after {
    border-top: 2px solid #e9e8e6;
}
.empty {
    position: absolute;
    inset: 0 0 4px 50px;
    display: flex;
    justify-content: center;
    align-items: center;
    color: #7d7a75;
}
.empty span {
    padding: 0 12px;
    background-color: #ffffff;
}
.x-title {
    margin-top: 9px;
    padding-left: 58px;
    font-size: 14px;
    line-height: 20px;
    font-weight: 600;
    text-align: center;
}

/* Side column */
.side-card {
    padding: 19px 33px 58px 24px;
}
.actions {
    display: flex;
    justify-content: center;
    gap: 14px;
    margin-top: 37px;
}
.tight .actions {
    margin-top: 33px;
}
.action {
    display: flex;
    align-items: center;
    gap: 7px;
    height: 34px;
    padding: 0 10px 0 11px;
    border: 1px solid #e6e5e3;
    border-radius: 7px;
    font-weight: 500;
    color: #9a9792;
}
.action svg {
    width: 15px;
    height: 15px;
}
.mood-card {
    height: 573px;
}
.donut {
    display: flex;
    justify-content: center;
    align-items: center;
    width: 256px;
    height: 256px;
    margin: 137px auto 0;
    padding-bottom: 6px;
    border: 20px solid #e9e9e7;
    border-radius: 50%;
    color: #7d7a75;
}
.links {
    display: flex;
    flex-direction: column;
    gap: 14px;
    padding: 22px 31px 21px;
    border-radius: 12px;
    background-color: #f9f8f7;
}
.links a {
    display: flex;
    align-items: center;
    gap: 10px;
    height: 24px;
    font-size: 18px;
    font-weight: 500;
}
.links svg {
    width: 19px;
    height: 19px;
    color: #55534e;
}
.links span {
    border-bottom: 1px solid #dddcd9;
}
```
